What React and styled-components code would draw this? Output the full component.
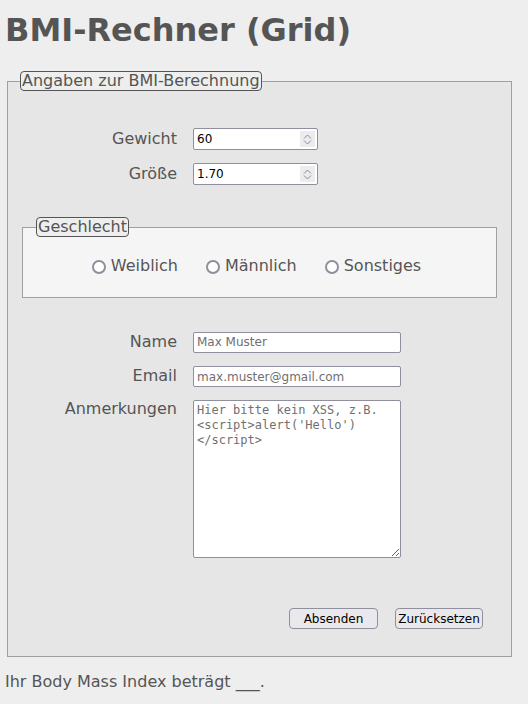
import styled, { createGlobalStyle } from "styled-components";

const Global = createGlobalStyle`
  body {
    margin: 0;
    padding: 0 14px 0 5px;
    background: #eeeeee;
    color: #555555;
    font-family: "DejaVu Sans", sans-serif;
  }
`;

const Title = styled.h1`
  margin: 0;
  padding-top: 10px;
  font-size: 32px;
  line-height: 40px;
  font-weight: bold;
  color: #555;
`;

const Fieldset = styled.fieldset`
  margin: 21px 2px 0;
  padding: 37px 14px 27px;
  border: 1px solid #a0a0a0;
  background: #e6e6e6;
  min-width: 0;
`;

const InnerFieldset = styled.fieldset`
  margin: 0;
  padding: 0;
  border: 1px solid #a0a0a0;
  background: #f5f5f5;
  min-width: 0;
`;

const Legend = styled.legend`
  padding: 0 1px;
  margin-left: ${(p) => p.indent}px;
  border: 1px solid #555;
  border-radius: 4px;
  background: #eeeeee;
  font-size: 16px;
  line-height: 18px;
  color: #555;
`;

const Grid = styled.div`
  display: grid;
  grid-template-columns: 155px 1fr;
  column-gap: 16px;
  row-gap: 13px;
  align-items: center;
`;

const Label = styled.label`
  text-align: right;
  font-size: 16px;
  line-height: 20px;
  align-self: ${(p) => (p.top ? "start" : "center")};
  margin-top: ${(p) => (p.top ? "-1px" : "0")};
`;

const FieldWrap = styled.div`
  position: relative;
  width: ${(p) => p.w}px;
`;

const Input = styled.input`
  box-sizing: border-box;
  width: 100%;
  height: ${(p) => p.h}px;
  border: 1px solid #8f8f9d;
  border-radius: 2px;
  background: #fff;
  padding: 0 3px;
  font-family: "DejaVu Sans", sans-serif;
  font-size: 12px;
  color: #000;
  outline: none;
  &::placeholder {
    color: #707070;
  }
`;

const Spinner = styled.div`
  position: absolute;
  right: 3px;
  top: 3px;
  bottom: 3px;
  width: 15px;
  background: #ececef;
  display: flex;
  flex-direction: column;
  align-items: center;
  justify-content: center;
  gap: 1px;
`;

const TextArea = styled.textarea`
  box-sizing: border-box;
  width: 208px;
  height: 158px;
  border: 1px solid #8f8f9d;
  border-radius: 2px;
  background: #fff;
  padding: 2px 3px;
  font-family: "DejaVu Sans Mono", monospace;
  font-size: 12px;
  line-height: 15px;
  resize: both;
  outline: none;
  &::placeholder {
    color: #707070;
  }
`;

const Full = styled.div`
  grid-column: 1 / -1;
  margin: ${(p) => p.m || "0"};
`;

const RadioRow = styled.div`
  display: flex;
  justify-content: center;
  gap: 28px;
  padding: 19px 0 21px;
  margin-left: -6px;
`;

const RadioLabel = styled.label`
  display: flex;
  align-items: center;
  gap: 5px;
  font-size: 16px;
  line-height: 20px;
`;

const Radio = styled.input`
  appearance: none;
  margin: 2px 0 0;
  width: 14px;
  height: 14px;
  border: 2px solid #8f8f9d;
  border-radius: 50%;
  background: #fff;
  box-sizing: border-box;
`;

const Buttons = styled.div`
  display: flex;
  justify-content: flex-end;
  gap: 17px;
  padding-right: 14px;
`;

const Button = styled.button`
  box-sizing: border-box;
  width: ${(p) => p.w}px;
  height: 21px;
  border: 1px solid #8f8f9d;
  border-radius: 4px;
  background: #e9e9ed;
  font-family: "DejaVu Sans", sans-serif;
  font-size: 12px;
  color: #000;
  padding: 0;
`;

const Result = styled.p`
  margin: 15px 0 0;
  font-size: 16px;
  line-height: 20px;
`;

function Chevrons() {
  return (
    <Spinner>
      <svg width="9" height="5" viewBox="0 0 9 5">
        <path d="M1 4.5 L4.5 1 L8 4.5" fill="none" stroke="#8a8a95" strokeWidth="1" />
      </svg>
      <svg width="9" height="5" viewBox="0 0 9 5">
        <path d="M1 0.5 L4.5 4 L8 0.5" fill="none" stroke="#8a8a95" strokeWidth="1" />
      </svg>
    </Spinner>
  );
}

export default function App() {
  return (
    <>
      <Global />
      <Title>BMI-Rechner (Grid)</Title>
      <Fieldset>
        <Legend indent={-2}>Angaben zur BMI-Berechnung</Legend>
        <Grid>
          <Label>Gewicht</Label>
          <FieldWrap w={125}>
            <Input h={22} type="text" defaultValue="60" />
            <Chevrons />
          </FieldWrap>
          <Label>Größe</Label>
          <FieldWrap w={125}>
            <Input h={22} type="text" defaultValue="1.70" />
            <Chevrons />
          </FieldWrap>

          <Full m="19px 0 20px">
            <InnerFieldset>
              <Legend indent={13}>Geschlecht</Legend>
              <RadioRow>
                <RadioLabel>
                  <Radio type="radio" name="g" />
                  Weiblich
                </RadioLabel>
                <RadioLabel>
                  <Radio type="radio" name="g" />
                  Männlich
                </RadioLabel>
                <RadioLabel>
                  <Radio type="radio" name="g" />
                  Sonstiges
                </RadioLabel>
              </RadioRow>
            </InnerFieldset>
          </Full>

          <Label>Name</Label>
          <FieldWrap w={208}>
            <Input h={21} placeholder="Max Muster" />
          </FieldWrap>
          <Label>Email</Label>
          <FieldWrap w={208}>
            <Input h={21} placeholder="max.muster@gmail.com" />
          </FieldWrap>
          <Label top>Anmerkungen</Label>
          <TextArea placeholder={"Hier bitte kein XSS, z.B. <script>alert('Hello')</script>"} />

          <Full m="37px 0 0">
            <Buttons>
              <Button w={89}>Absenden</Button>
              <Button w={88}>Zurücksetzen</Button>
            </Buttons>
          </Full>
        </Grid>
      </Fieldset>
      <Result>Ihr Body Mass Index beträgt ___.</Result>
    </>
  );
}
